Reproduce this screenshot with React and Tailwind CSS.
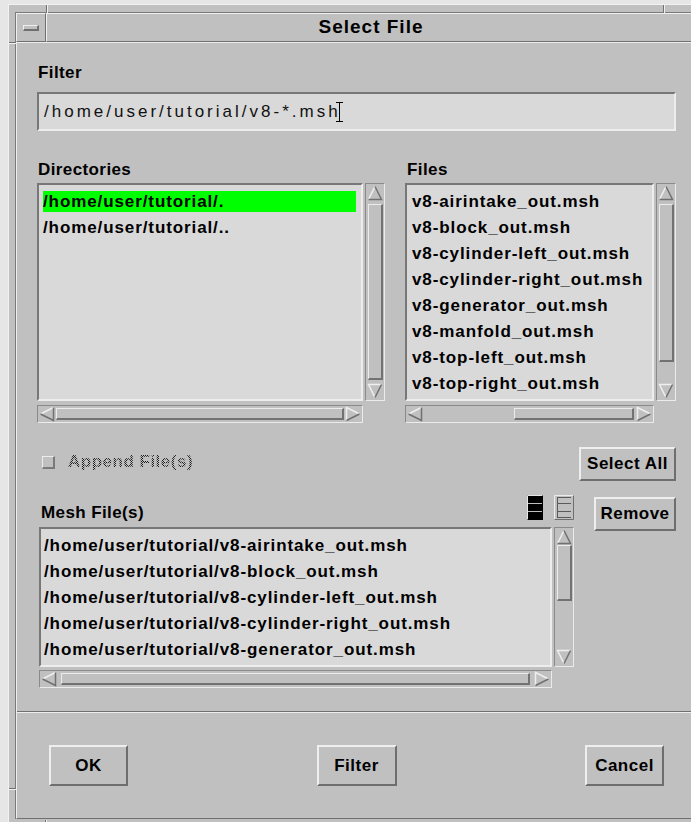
const FONT = "font-['Liberation_Sans',Arial,sans-serif]";

// Motif style bevels
const RAISED =
  'border-2 border-t-[#eeeeee] border-l-[#eeeeee] border-b-[#6e6e6e] border-r-[#6e6e6e]';
const SUNKEN =
  'border-2 border-t-[#777777] border-l-[#777777] border-b-[#ededed] border-r-[#ededed]';
const TROUGH =
  'border border-t-[#8a8a8a] border-l-[#8a8a8a] border-b-[#ebebeb] border-r-[#ebebeb]';
const THUMB =
  'border-t border-l border-r-2 border-b-2 border-t-[#ececec] border-l-[#ececec] border-r-[#727272] border-b-[#727272]';

const DIRS = ['/home/user/tutorial/.', '/home/user/tutorial/..'];

const FILES = [
  'v8-airintake_out.msh',
  'v8-block_out.msh',
  'v8-cylinder-left_out.msh',
  'v8-cylinder-right_out.msh',
  'v8-generator_out.msh',
  'v8-manfold_out.msh',
  'v8-top-left_out.msh',
  'v8-top-right_out.msh',
];

const MESH = FILES.slice(0, 5).map((f) => `/home/user/tutorial/${f}`);

function Arrow({ dir }) {
  const shapes = {
    up: { fill: '8,1.5 14.5,14.5 1.5,14.5', light: 'M1.5 14.5 L8 1.5', dark: 'M8 1.5 L14.5 14.5 L1.5 14.5' },
    down: { fill: '1.5,1.5 14.5,1.5 8,14.5', light: 'M8 14.5 L1.5 1.5 L14.5 1.5', dark: 'M14.5 1.5 L8 14.5' },
    left: { fill: '1.5,8 14.5,1.5 14.5,14.5', light: 'M1.5 8 L14.5 1.5', dark: 'M14.5 1.5 L14.5 14.5 L1.5 8' },
    right: { fill: '1.5,1.5 14.5,8 1.5,14.5', light: 'M1.5 14.5 L1.5 1.5 L14.5 8', dark: 'M14.5 8 L1.5 14.5' },
  }
  const s = shapes[dir]
  return (
    <svg width="16" height="16" viewBox="0 0 16 16" className="shrink-0">
      <polygon points={s.fill} fill="#c0c0c0" />
      <path d={s.light} fill="none" stroke="#efefef" strokeWidth="1.5" />
      <path d={s.dark} fill="none" stroke="#707070" strokeWidth="1.5" />
    </svg>
  )
}

function VScroll({ height, thumb }) {
  return (
    <div className={`flex w-[20px] flex-col bg-[#c0c0c0] p-px ${TROUGH} ${height}`}>
      <Arrow dir="up" />
      <div className="flex-1 pl-px">
        <div className={`${THUMB} bg-[#c0c0c0] ${thumb}`} />
      </div>
      <Arrow dir="down" />
    </div>
  )
}

function HScroll({ width, thumb }) {
  return (
    <div className={`flex h-[18px] flex-row items-center bg-[#c0c0c0] p-px ${TROUGH} ${width}`}>
      <Arrow dir="left" />
      <div className="flex h-full flex-1 items-stretch py-px">
        <div className={`${THUMB} bg-[#c0c0c0] ${thumb}`} />
      </div>
      <Arrow dir="right" />
    </div>
  )
}

function Label({ children, className = '' }) {
  return (
    <div className={`text-[17px] font-bold leading-[20px] tracking-[0.4px] text-black ${className}`}>
      {children}
    </div>
  )
}

function Button({ children, className = '' }) {
  return (
    <div
      className={`flex items-center justify-center bg-[#c0c0c0] text-[17px] font-bold tracking-[0.5px] text-black ${RAISED} ${className}`}
    >
      {children}
    </div>
  )
}

function ListItem({ children, selected }) {
  return (
    <div
      className={`mb-[5px] h-[21px] whitespace-nowrap text-[17px] font-bold leading-[21px] tracking-[0.9px] text-black ${
        selected ? 'bg-[#00ff00]' : ''
      }`}
    >
      {children}
    </div>
  )
}

function ListIcons() {
  return (
    <div className="flex items-start gap-[11px]">
      <svg width="16" height="25" viewBox="0 0 16 25">
        <rect x="0" y="0" width="16" height="25" fill="#000" />
        <path d="M0.5 24.5 V0.5 H15.5" fill="none" stroke="#e6e6e6" />
        <path d="M1 8.5 H15 M1 16.5 H15" stroke="#bdbdbd" />
      </svg>
      <svg width="20" height="25" viewBox="0 0 20 25">
        <rect x="0" y="0" width="20" height="25" fill="#c0c0c0" />
        <path d="M0.5 24.5 V0.5 H19.5" fill="none" stroke="#ececec" />
        <path d="M19.5 0.5 V24.5 H0.5" fill="none" stroke="#6e6e6e" />
        <path d="M3 2.5 H17 M3 8.5 H17 M3 16.5 H17 M3 22.5 H17" stroke="#5a5a5a" />
        <path d="M3.5 2.5 V22.5" stroke="#5a5a5a" />
      </svg>
    </div>
  )
}

function TextCursor() {
  return (
    <svg width="7" height="20" viewBox="0 0 7 20" className="-ml-[5px] inline-block align-middle">
      <path d="M0 0.5 H7 M0 19.5 H7 M3.5 0.5 V19.5" stroke="#000" strokeWidth="1" />
    </svg>
  )
}

export default function App() {
  return (
    <div className={`h-[822px] w-[691px] overflow-hidden bg-[#e6e6e6] pl-[8px] pt-[4px] ${FONT}`}>
      {/* window manager frame */}
      <div className="relative h-[830px] w-[694px] border-l border-t border-r border-l-[#f2f2f2] border-t-[#f2f2f2] border-r-[#707070] bg-[#c0c0c0] px-[6px] pt-[7px]">
        <div className="absolute left-[37px] top-0 h-[8px] w-[2px] border-l border-l-[#707070] border-r border-r-[#f0f0f0]" />
        <div className="absolute left-[654px] top-0 h-[8px] w-[2px] border-l border-l-[#707070] border-r border-r-[#f0f0f0]" />
        <div className="absolute left-0 top-[37px] h-[2px] w-[7px] border-t border-t-[#707070] border-b border-b-[#f0f0f0]" />
        <div className="absolute left-0 top-[783px] h-[2px] w-[7px] border-t border-t-[#707070] border-b border-b-[#f0f0f0]" />
        <div className="absolute left-[36px] top-[815px] h-[10px] w-[2px] border-l border-l-[#707070] border-r border-r-[#f0f0f0]" />

        <div className="flex flex-col border-l border-t border-[#7a7a7a]">
          {/* title bar */}
          <div className="flex h-[29px]">
            <div className="flex w-[30px] items-center justify-center border-b border-r border-t border-l border-b-[#707070] border-r-[#707070] border-t-[#efefef] border-l-[#efefef]">
              <div className="h-[6px] w-[16px] border border-b-2 border-r-2 border-t-[#efefef] border-l-[#efefef] border-b-[#707070] border-r-[#707070] bg-[#c0c0c0]" />
            </div>
            <div className="flex flex-1 items-center justify-center border-b border-t border-l border-b-[#707070] border-t-[#efefef] border-l-[#efefef] text-[19px] font-bold tracking-[1px] text-black">
              Select File
            </div>
          </div>

          {/* dialog body */}
          <div className="flex h-[777px] flex-col border-l border-t border-b border-l-[#ededed] border-t-[#ededed] border-b-[#707070]">
            <div className="flex flex-col pl-[20px] pr-[19px]">
              <Label className="mt-[20px] pl-px">Filter</Label>
              <div className={`mt-[9px] flex h-[39px] items-center bg-[#d9d9d9] pl-[5px] ${SUNKEN}`}>
                <span className="whitespace-nowrap text-[17px] tracking-[3px] text-[#111]">
                  /home/user/tutorial/v8-*.msh
                </span>
                <TextCursor />
              </div>

              <div className="mt-[29px] flex gap-[20px]">
                <div className="flex flex-col">
                  <Label className="pl-px">Directories</Label>
                  <div className="mt-[3px] flex gap-[2px]">
                    <div className={`h-[218px] w-[326px] bg-[#d9d9d9] px-[4px] pt-[6px] pr-[5px] ${SUNKEN}`}>
                      {DIRS.map((d, i) => (
                        <ListItem key={d} selected={i === 0}>
                          {d}
                        </ListItem>
                      ))}
                    </div>
                    <VScroll height="h-[218px]" thumb="mt-[3px] h-[176px]" />
                  </div>
                  <div className="mt-[4px]">
                    <HScroll width="w-[326px]" thumb="mx-[1px] flex-1" />
                  </div>
                </div>

                <div className="flex flex-col">
                  <Label className="pl-[2px]">Files</Label>
                  <div className="mt-[3px] flex gap-[2px]">
                    <div className={`h-[218px] w-[249px] overflow-hidden bg-[#d9d9d9] px-[5px] pt-[6px] ${SUNKEN}`}>
                      {FILES.map((f) => (
                        <ListItem key={f}>{f}</ListItem>
                      ))}
                    </div>
                    <VScroll height="h-[218px]" thumb="mt-[3px] h-[158px]" />
                  </div>
                  <div className="mt-[4px]">
                    <HScroll width="w-[249px]" thumb="ml-[91px] mr-[2px] flex-1" />
                  </div>
                </div>
              </div>

              <div className="mt-[24px] flex">
                <div className="ml-[2px] flex flex-col">
                  <div className="flex h-[34px] items-center">
                    <div className="ml-[3px] mt-[-4px] h-[13px] w-[13px] border border-b-2 border-r-2 border-t-[#ececec] border-l-[#ececec] border-b-[#7a7a7a] border-r-[#7a7a7a] bg-[#c0c0c0]" />
                    <span className="ml-[13px] mt-[-4px] bg-[image:repeating-conic-gradient(#1e1e1e_0_25%,transparent_0_50%)] bg-[length:2px_2px] bg-clip-text text-[17px] font-bold tracking-[0.5px] text-transparent">
                      Append File(s)
                    </span>
                  </div>
                  <div className="mt-[14px] flex h-[32px] w-[535px] justify-between">
                    <Label className="mt-[8px] pl-[2px]">Mesh File(s)</Label>
                    <ListIcons />
                  </div>
                  <div className="flex gap-[2px]">
                    <div className={`h-[140px] w-[513px] overflow-hidden bg-[#d9d9d9] px-[3px] pt-[6px] ${SUNKEN}`}>
                      {MESH.map((m) => (
                        <ListItem key={m}>{m}</ListItem>
                      ))}
                    </div>
                    <VScroll height="h-[140px]" thumb="mt-0 h-[56px]" />
                  </div>
                  <div className="mt-[3px]">
                    <HScroll width="w-[513px]" thumb="mx-[4px] flex-1" />
                  </div>
                </div>

                <div className="ml-auto flex flex-col items-end">
                  <Button className="h-[34px] w-[97px]">Select All</Button>
                  <Button className="mt-[16px] h-[34px] w-[82px]">Remove</Button>
                </div>
              </div>
            </div>

            {/* separator */}
            <div className="mt-[23px] h-[2px] border-b border-t border-b-[#ededed] border-t-[#707070]" />

            <div className="mt-[32px] flex justify-between pl-[32px] pr-[31px]">
              <Button className="h-[41px] w-[79px]">OK</Button>
              <Button className="h-[41px] w-[80px]">Filter</Button>
              <Button className="h-[41px] w-[79px]">Cancel</Button>
            </div>
          </div>
        </div>
      </div>
    </div>
  )
}
